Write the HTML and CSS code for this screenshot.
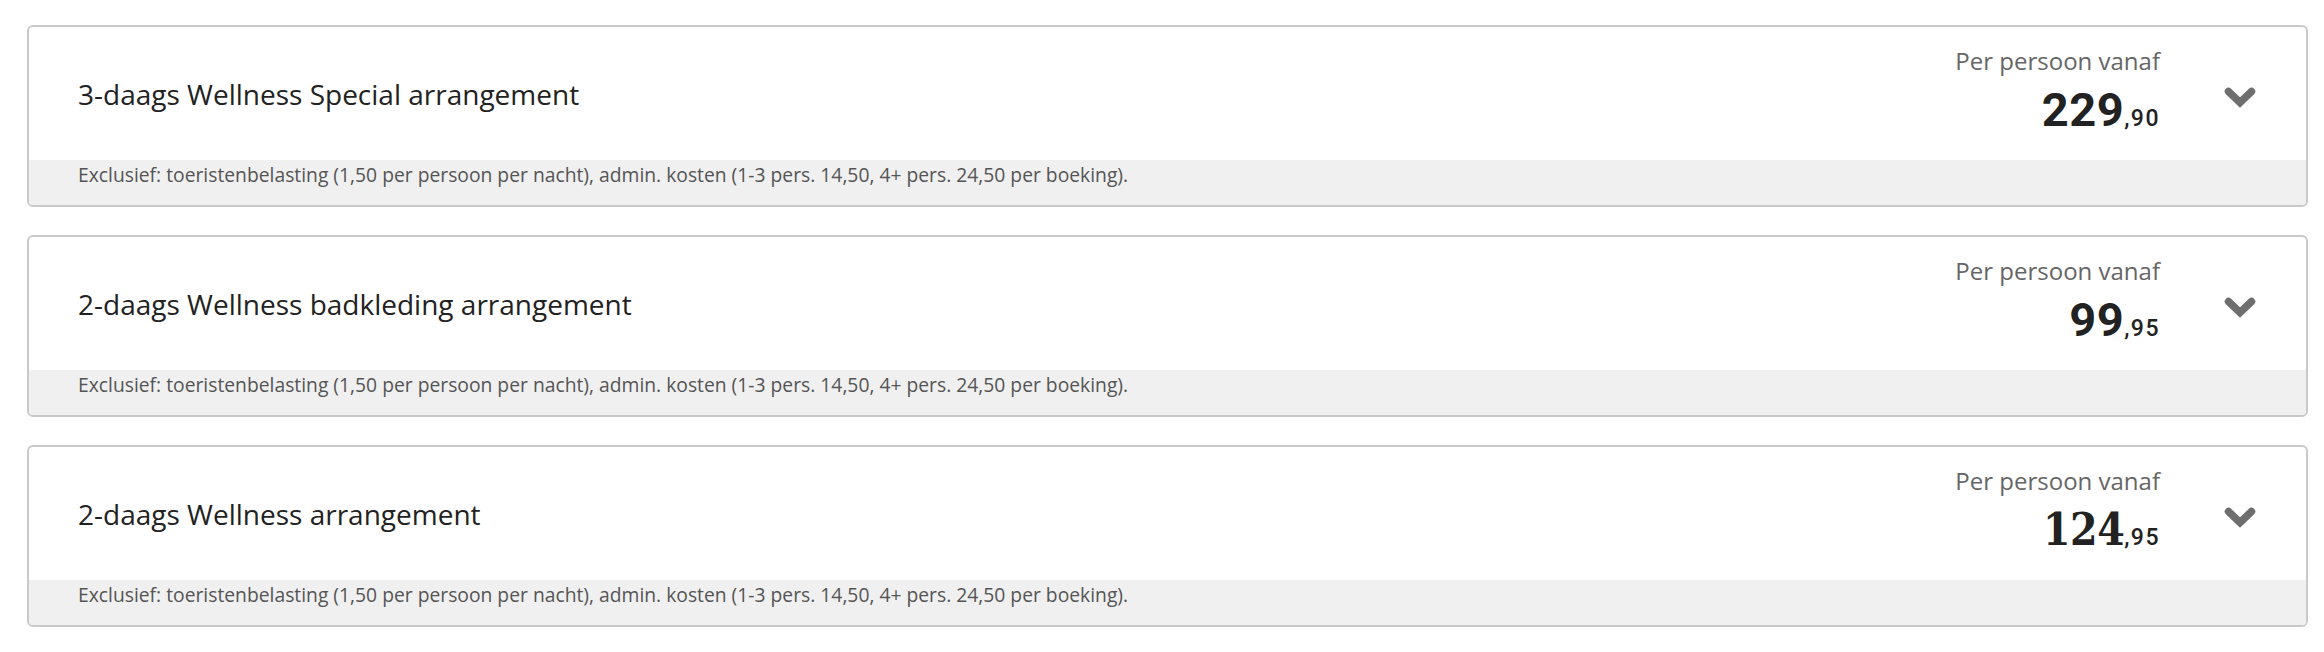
FILE: index.html
```html
<!DOCTYPE html>
<html lang="nl">
<head>
<meta charset="utf-8">
<title>Arrangementen</title>
<link rel="stylesheet" href="styles.css">
</head>
<body>
<div class="list">
  <div class="card">
    <div class="card-main">
      <h2 class="title">3-daags Wellness Special arrangement</h2>
      <div class="side">
        <div class="price">
          <div class="price-label">Per persoon vanaf</div>
          <div class="price-value"><span class="euros">229</span><span class="cents">,90</span></div>
        </div>
        <span class="toggle"><svg width="32" height="21" viewBox="0 0 32 21"><polyline points="4.5,4.5 16,15.5 27.5,4.5" fill="none" stroke="#6e6e6e" stroke-width="7.5" stroke-linecap="round" stroke-linejoin="miter"/></svg></span>
      </div>
    </div>
    <div class="card-foot">Exclusief: toeristenbelasting (1,50 per persoon per nacht), admin. kosten (1-3 pers. 14,50, 4+ pers. 24,50 per boeking).</div>
  </div>
  <div class="card">
    <div class="card-main">
      <h2 class="title">2-daags Wellness badkleding arrangement</h2>
      <div class="side">
        <div class="price">
          <div class="price-label">Per persoon vanaf</div>
          <div class="price-value"><span class="euros">99</span><span class="cents">,95</span></div>
        </div>
        <span class="toggle"><svg width="32" height="21" viewBox="0 0 32 21"><polyline points="4.5,4.5 16,15.5 27.5,4.5" fill="none" stroke="#6e6e6e" stroke-width="7.5" stroke-linecap="round" stroke-linejoin="miter"/></svg></span>
      </div>
    </div>
    <div class="card-foot">Exclusief: toeristenbelasting (1,50 per persoon per nacht), admin. kosten (1-3 pers. 14,50, 4+ pers. 24,50 per boeking).</div>
  </div>
  <div class="card">
    <div class="card-main">
      <h2 class="title">2-daags Wellness arrangement</h2>
      <div class="side">
        <div class="price">
          <div class="price-label">Per persoon vanaf</div>
          <div class="price-value"><span class="euros euros-serif">124</span><span class="cents">,95</span></div>
        </div>
        <span class="toggle"><svg width="32" height="21" viewBox="0 0 32 21"><polyline points="4.5,4.5 16,15.5 27.5,4.5" fill="none" stroke="#6e6e6e" stroke-width="7.5" stroke-linecap="round" stroke-linejoin="miter"/></svg></span>
      </div>
    </div>
    <div class="card-foot">Exclusief: toeristenbelasting (1,50 per persoon per nacht), admin. kosten (1-3 pers. 14,50, 4+ pers. 24,50 per boeking).</div>
  </div>
</div>
</body>
</html>
```

FILE: styles.css
```css
body {
  margin: 0;
  background: #ffffff;
  font-family: "Open Sans", "Noto Sans", sans-serif;
  color: #222222;
}

.list {
  display: flex;
  flex-direction: column;
  gap: 28px;
  padding: 25px 16px 0 27px;
}

.card {
  border: 2px solid #c9c9c9;
  border-radius: 6px;
  overflow: hidden;
  background: #ffffff;
}

.card-main {
  height: 133px;
  display: flex;
  align-items: center;
  justify-content: space-between;
  padding-left: 49px;
}

.title {
  margin: 0;
  font-size: 28px;
  font-weight: 400;
  color: #222222;
}

.side {
  align-self: stretch;
  display: flex;
  gap: 64px;
  padding-right: 50px;
}

.price {
  display: flex;
  flex-direction: column;
  align-items: flex-end;
  padding-top: 20px;
}

.price-label {
  font-size: 24px;
  line-height: 28px;
  color: #666666;
}

.price-value {
  margin-top: 11px;
  line-height: 48px;
  font-family: Roboto, "Liberation Sans", sans-serif;
  color: #222222;
  white-space: nowrap;
}

.euros {
  font-size: 47px;
  font-weight: 700;
  letter-spacing: 0.5px;
}

.euros-serif {
  font-family: "DejaVu Serif Condensed", "DejaVu Serif", serif;
  font-size: 44px;
  letter-spacing: -0.5px;
}

.cents {
  font-size: 23px;
  font-weight: 500;
  letter-spacing: 1.5px;
}

.toggle {
  align-self: center;
  display: flex;
  margin-top: 8px;
}

.card-foot {
  height: 45px;
  background: #f0f0f0;
  padding-left: 49px;
  font-size: 19.3px;
  line-height: 30px;
  color: #555555;
}
```
